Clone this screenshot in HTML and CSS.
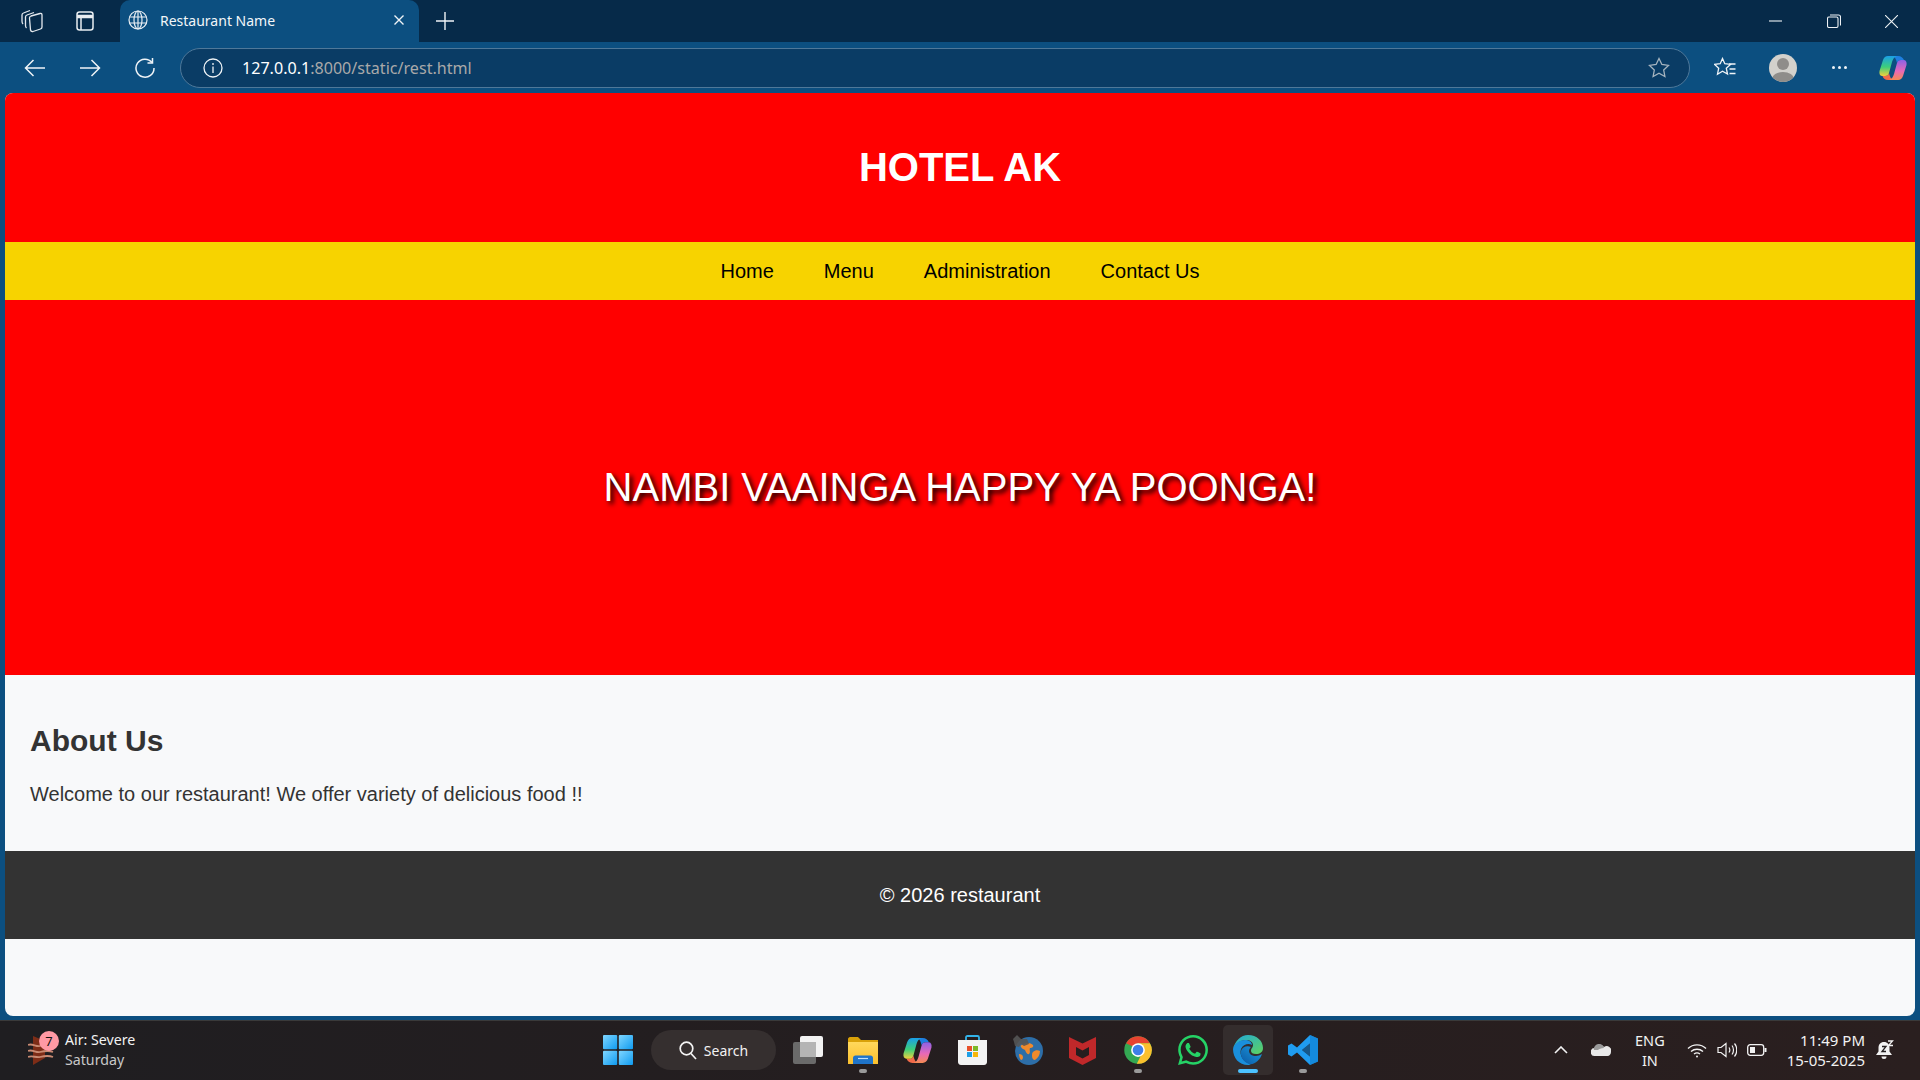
FILE: index.html
```html
<!DOCTYPE html>
<html lang="en">
<head>
<meta charset="utf-8">
<title>Restaurant Name</title>
<link rel="stylesheet" href="styles.css">
</head>
<body>
<svg class="defs" width="0" height="0">
  <defs>
    <linearGradient id="cpA" x1="0" y1="0" x2="0" y2="1"><stop offset="0" stop-color="#1a9fe8"/><stop offset=".55" stop-color="#3dcf7a"/><stop offset="1" stop-color="#f2d03c"/></linearGradient>
    <linearGradient id="cpB" x1="0" y1="0" x2="0" y2="1"><stop offset="0" stop-color="#8a62e6"/><stop offset=".55" stop-color="#e868b8"/><stop offset="1" stop-color="#f58a52"/></linearGradient>
    <symbol id="copilot" viewBox="0 0 28 26">
      <path d="M14 1h5c3 0 5 2 6 4h-3c-2 0-3.500 1-4 3-1-4-2-6-4-7z" fill="#1f7fe0"/>
      <path d="M14 25H9c-3 0-5-2-5.500-4H6c2 0 3.500-1 4-3 1 4 2 6 4 7z" fill="#f26a4a"/>
      <path d="M9 1h9c-3 1-4 3-5 6l-3 11c-.5 2-2 3-4 3H3.500C1 21 0 19 .5 16L4 5C5 2.500 6.500 1 9 1z" fill="url(#cpA)"/>
      <path d="M19 25h-9c3-1 4-3 5-6l3-11c.5-2 2-3 4-3h2.500C27 5 28 7 27.500 10L24 21c-1 2.500-2.500 4-5 4z" fill="url(#cpB)"/>
    </symbol>
    <linearGradient id="winG" x1="0" y1="0" x2="1" y2="1"><stop offset="0" stop-color="#7fd6ff"/><stop offset="1" stop-color="#0f9bf0"/></linearGradient>
    <linearGradient id="edgeA" x1="0" y1="1" x2="1" y2="0"><stop offset="0" stop-color="#0c59a4"/><stop offset="1" stop-color="#1b9de2"/></linearGradient>
    <linearGradient id="edgeB" x1="0" y1="0" x2="1" y2="1"><stop offset="0" stop-color="#1fa9dc"/><stop offset="1" stop-color="#5fd35d"/></linearGradient>
    <linearGradient id="folderG" x1="0" y1="0" x2="0" y2="1"><stop offset="0" stop-color="#ffd85c"/><stop offset="1" stop-color="#fbc02d"/></linearGradient>
  </defs>
</svg>

<div class="tabstrip">
  <div class="strip-left">
    <span class="strip-btn">
      <svg width="22" height="24" viewBox="0 0 22 24" fill="none" stroke="#e4e9ee" stroke-width="1.300"><path d="M10 7l9-2.500Q21 4 21 6v12q0 1.500-1.500 2L12 22.500q-2 .5-2.500-1.500L8.500 9q0-1.500 1.500-2z"/><path d="M5.500 19q-1-1-1-2.500V8q0-1.500 1.500-2l7-2.500"/><path d="M2 15q-1-1-1-3V6q0-1.500 1.500-2L9 1.500"/></svg>
    </span>
    <span class="strip-btn strip-btn-next">
      <svg width="18" height="20" viewBox="0 0 18 20" fill="none" stroke="#e8edf1" stroke-width="1.500"><rect x="1" y="1" width="16" height="18" rx="2.500"/><path d="M1 5.500h16" stroke-width="3.500"/><path d="M5 6v13"/></svg>
    </span>
  </div>
  <div class="tab">
    <svg class="tab-globe" width="20" height="20" viewBox="0 0 20 20" fill="none" stroke="#e8eef3" stroke-width="1.200"><circle cx="10" cy="10" r="9"/><ellipse cx="10" cy="10" rx="4" ry="9"/><path d="M1.500 7h17M1.500 13h17M10 1v18"/></svg>
    <span class="tab-title">Restaurant Name</span>
    <svg width="12" height="12" viewBox="0 0 12 12" stroke="#f0f4f7" stroke-width="1.400"><path d="M1.500 1.500l9 9M10.500 1.500l-9 9"/></svg>
  </div>
  <svg class="new-tab" width="18" height="18" viewBox="0 0 18 18" stroke="#f0f4f7" stroke-width="1.400"><path d="M9 0v18M0 9h18"/></svg>
  <div class="win-controls">
    <svg width="13" height="13" viewBox="0 0 13 13" stroke="#eef2f5" stroke-width="1.100"><path d="M0 6h13"/></svg>
    <svg width="14" height="14" viewBox="0 0 14 14" fill="none" stroke="#eef2f5" stroke-width="1.100"><rect x=".5" y="3" width="10.500" height="10.500" rx="1.500"/><path d="M3 1h8.500c1 0 2 1 2 2v8.500"/></svg>
    <svg width="13" height="13" viewBox="0 0 13 13" stroke="#eef2f5" stroke-width="1.100"><path d="M0 0l13 13M13 0L0 13"/></svg>
  </div>
</div>

<div class="toolbar">
  <div class="nav-btns">
    <svg width="22" height="18" viewBox="0 0 22 18" fill="none" stroke="#f0f4f7" stroke-width="1.500"><path d="M21 9H1.500M9.500 1 1.500 9l8 8"/></svg>
    <svg width="22" height="18" viewBox="0 0 22 18" fill="none" stroke="#f0f4f7" stroke-width="1.500"><path d="M1 9h19.500M12.500 1l8 8-8 8"/></svg>
    <svg width="20" height="22" viewBox="0 0 20 22" fill="none" stroke="#f0f4f7" stroke-width="1.500"><path d="M17 5.500A9 9 0 1 0 19 11"/><path d="M17.500 1v5h-5"/></svg>
  </div>
  <div class="address">
    <svg width="20" height="20" viewBox="0 0 20 20" fill="none" stroke="#f0f4f7" stroke-width="1.300"><circle cx="10" cy="10" r="9"/><path d="M10 8.500V15M10 5v2"/></svg>
    <span class="url"><span class="url-host">127.0.0.1</span><span class="url-rest">:8000/static/rest.html</span></span>
    <svg class="addr-star" width="22" height="21" viewBox="0 0 22 21" fill="none" stroke="#a6b4bf" stroke-width="1.300"><path d="M11 1.500l2.900 6 6.600.9-4.800 4.600 1.200 6.500-5.900-3.200-5.900 3.200 1.200-6.500L1.500 8.400l6.600-.9z"/></svg>
  </div>
  <div class="tool-right">
    <svg width="22" height="22" viewBox="0 0 22 22" fill="none" stroke="#f0f4f7" stroke-width="1.300"><path d="M8.500 1.500l2.300 5.200 5.700.7-4.200 3.800 1.200 5.800-5-2.800-5 3 1.200-6-4-3.800 5.500-.7z"/><path d="M15 7h6.500M15.500 12h6M15.500 16.500h6"/></svg>
    <span class="avatar"><span class="avatar-head"></span><span class="avatar-body"></span></span>
    <span class="dots"><i></i><i></i><i></i></span>
    <svg class="tool-copilot" width="28" height="26"><use href="#copilot"/></svg>
  </div>
</div>

<main class="page">
  <header class="site-header"><h1>HOTEL AK</h1></header>
  <nav class="site-nav">
    <a>Home</a><a>Menu</a><a>Administration</a><a>Contact Us</a>
  </nav>
  <section class="hero"><h2>NAMBI VAAINGA HAPPY YA POONGA!</h2></section>
  <section class="about">
    <h2>About Us</h2>
    <p>Welcome to our restaurant! We offer variety of delicious food !!</p>
  </section>
  <footer class="site-footer">© 2026 restaurant</footer>
</main>

<div class="taskbar">
  <div class="tb-left">
    <span class="weather">
      <svg width="26" height="32" viewBox="0 0 26 32"><path d="M5 2 17 7v17L5 31z" fill="#7d2d17"/><path d="M0 11c4-2 8 2 12 1s8-2 12 0M0 17c4-2 8 2 12 1s8-2 13 0M0 23c4-2 8 1 12 0s8-2 13 0" fill="none" stroke="#c98a72" stroke-width="1.800"/></svg>
      <span class="badge">7</span>
    </span>
    <span class="weather-text"><span class="w1">Air: Severe</span><span class="w2">Saturday</span></span>
  </div>
  <div class="tb-center">
    <span class="cell">
      <svg width="30" height="30" viewBox="0 0 30 30" fill="url(#winG)"><rect x="0" y="0" width="14.200" height="14.200" rx="1"/><rect x="15.800" y="0" width="14.200" height="14.200" rx="1"/><rect x="0" y="15.800" width="14.200" height="14.200" rx="1"/><rect x="15.800" y="15.800" width="14.200" height="14.200" rx="1"/></svg>
    </span>
    <span class="search">
      <svg width="18" height="19" viewBox="0 0 18 19" fill="none" stroke="#f4f4f4" stroke-width="1.700"><circle cx="7.500" cy="7.500" r="6.300"/><path d="M12 12.500l5 5.500"/></svg>
      <span>Search</span>
    </span>
    <span class="cell">
      <svg width="30" height="28" viewBox="0 0 30 28"><rect x="0" y="6" width="23" height="22" rx="2" fill="#6a6a6a"/><rect x="7" y="0" width="23" height="21" rx="2" fill="#f2f2f2"/><rect x="7" y="6" width="16" height="15" fill="#b4b4b4"/></svg>
    </span>
    <span class="cell">
      <svg width="30" height="27" viewBox="0 0 30 27"><path d="M0 2c0-1 1-2 2-2h8l3 3h17v5H0z" fill="#d9a109"/><path d="M0 5h30v22H0z" fill="url(#folderG)"/><path d="M5 21c0-1.500 1-2.500 2.500-2.500h15c1.500 0 2.500 1 2.500 2.500v6H5z" fill="#1f74c9"/><path d="M10 21.500h10" stroke="#bfe0fa" stroke-width="1.200"/></svg>
      <i class="pip"></i>
    </span>
    <span class="cell"><svg width="29" height="27"><use href="#copilot"/></svg></span>
    <span class="cell">
      <svg width="29" height="30" viewBox="0 0 29 30"><path d="M8 6V2.500C8 1.500 8.500 1 9.500 1h10c1 0 1.500.5 1.500 1.500V6" fill="none" stroke="#33b4ea" stroke-width="1.800"/><path d="M0 5h29v22c0 1.500-1 3-3 3H3c-2 0-3-1.500-3-3z" fill="#f3f3f3"/><rect x="9" y="11" width="5" height="5" fill="#e8502a"/><rect x="15" y="11" width="5" height="5" fill="#7db928"/><rect x="9" y="17" width="5" height="5" fill="#1f9fe6"/><rect x="15" y="17" width="5" height="5" fill="#f7b70a"/></svg>
    </span>
    <span class="cell">
      <svg width="30" height="30" viewBox="0 0 30 30"><circle cx="16" cy="16" r="14" fill="#2d6ea8"/><path d="M11 9c3-2 7-1 9 1 1 2-1 3-3 3-1 2 1 4-1 6-2 1-3-2-4-4-1-1-3-1-4-3s1-2 3-3zM20 17c2-2 5-2 7-1 0 4-2 7-5 9-2 0-3-2-3-4s0-3 1-4zM6 19c2 0 4 1 4 3s-1 3-2 3c-1-1-2-3-2-6z" fill="#f08a2c"/><path d="M0 4 4 0l4 4 6 0 2 5-5 2-3-2-2 3-4-1-1-4z" fill="#555" opacity=".9"/></svg>
    </span>
    <span class="cell">
      <svg width="27" height="30" viewBox="0 0 27 30"><path fill-rule="evenodd" d="M0 2 13.500 8.500 27 2v21L13.500 30 0 23zM7 12v8l6.500 3.500L20 20v-8l-6.500 3.500z" fill="#c0282a"/></svg>
    </span>
    <span class="cell">
      <svg width="30" height="30" viewBox="0 0 48 48"><circle cx="24" cy="24" r="22" fill="#34a853"/><path d="M24 2a22 22 0 0 1 19 11H24l-9 5L5 13A22 22 0 0 1 24 2z" fill="#e8432f"/><path d="M43 13a22 22 0 0 1-21 33l11-22-9-11z" fill="#fbc02d"/><circle cx="24" cy="24" r="11" fill="#fff"/><circle cx="24" cy="24" r="8.500" fill="#3f7fe8"/></svg>
      <i class="pip"></i>
    </span>
    <span class="cell">
      <svg width="30" height="30" viewBox="0 0 24 24" fill="#25d366"><path d="M17.472 14.382c-.297-.149-1.758-.867-2.030-.967-.273-.099-.471-.148-.67.15-.197.297-.767.966-.94 1.164-.173.199-.347.223-.644.075-.297-.15-1.255-.463-2.390-1.475-.883-.788-1.480-1.761-1.653-2.059-.173-.297-.018-.458.130-.606.134-.133.298-.347.446-.52.149-.174.198-.298.298-.497.099-.198.050-.371-.025-.52-.075-.149-.669-1.612-.916-2.207-.242-.579-.487-.5-.669-.51-.173-.008-.371-.01-.57-.01-.198 0-.52.074-.792.372-.272.297-1.040 1.016-1.040 2.479 0 1.462 1.065 2.875 1.213 3.074.149.198 2.096 3.200 5.077 4.487.709.306 1.262.489 1.694.625.712.227 1.360.195 1.871.118.571-.085 1.758-.719 2.006-1.413.248-.694.248-1.289.173-1.413-.074-.124-.272-.198-.57-.347m-5.421 7.403h-.004a9.870 9.870 0 01-5.031-1.378l-.361-.214-3.741.982.998-3.648-.235-.374a9.860 9.860 0 01-1.510-5.260c.001-5.450 4.436-9.884 9.888-9.884 2.640 0 5.122 1.030 6.988 2.898a9.825 9.825 0 012.893 6.994c-.003 5.450-4.437 9.884-9.885 9.884m8.413-18.297A11.815 11.815 0 0012.050 0C5.495 0 .16 5.335.157 11.892c0 2.096.547 4.142 1.588 5.945L.057 24l6.305-1.654a11.882 11.882 0 005.683 1.448h.005c6.554 0 11.890-5.335 11.893-11.893a11.821 11.821 0 00-3.480-8.413z"/></svg>
    </span>
    <span class="cell cell-active">
      <svg width="30" height="30" viewBox="0 0 30 30"><path d="M15 0c9 0 15 6 15 13 0 4-3 6-7 6-3 0-5-1-5-3 0-3 2-3 2-6 0-3-3-5-7-5-6 0-11 4-13 9C2 6 8 0 15 0z" fill="url(#edgeB)"/><path d="M0 14c1-5 6-9 12-9 4 0 7 2 7 5-3-2-9-1-11 4-2 6 2 13 10 15-2 1-2 1-3 1C6 30 0 23 0 14z" fill="#1a8fdb"/><path d="M8 16c1-4 6-6 10-4-1 1-2 2-2 4 0 3 3 5 7 5 2 0 4-1 6-2-2 6-7 11-13 10-6-2-9-8-8-13z" fill="url(#edgeA)"/></svg>
      <i class="pip pip-active"></i>
    </span>
    <span class="cell">
      <svg width="30" height="30" viewBox="0 0 30 30"><path d="M22 0l8 3.500v23L22 30 9 17.500l-5.500 4L0 19.500v-9l3.500-2 5.500 4z M22 8.500 14 15l8 6.500z" fill-rule="evenodd" fill="#1f9cf0"/><path d="M22 0l8 3.500v23L22 30z M22 8.500V21.500L14 15z" fill="#0d7fd1" fill-rule="evenodd" opacity=".6"/></svg>
      <i class="pip"></i>
    </span>
  </div>
  <div class="tb-right">
    <svg width="14" height="8" viewBox="0 0 14 8" fill="none" stroke="#f2f2f2" stroke-width="1.600"><path d="M1 7l6-6 6 6"/></svg>
    <svg class="tray-cloud" width="20" height="12" viewBox="0 0 20 12"><path d="M4 12a4 4 0 0 1-.5-8A5.500 5.500 0 0 1 13 3a4.500 4.500 0 0 1 7 5c0 2-1.500 4-3.500 4z" fill="#e8e8e8"/><path d="M3 6a4 4 0 0 1 10-2c-3 0-5 1-6 2z" fill="#9a9a9a"/></svg>
    <span class="lang"><span>ENG</span><span>IN</span></span>
    <svg width="20" height="15" viewBox="0 0 20 15" fill="none" stroke="#f2f2f2" stroke-width="1.400"><path d="M1 5.500a13 13 0 0 1 18 0M4 8.500a9 9 0 0 1 12 0M7 11a5 5 0 0 1 6 0"/><circle cx="10" cy="13.500" r="1" fill="#f2f2f2" stroke="none"/></svg>
    <svg class="tray-icon" width="20" height="16" viewBox="0 0 20 16" fill="none" stroke="#f2f2f2" stroke-width="1.200"><path d="M1 5.500h3L9 1.500v13l-5-4H1z"/><path d="M12 5.500c1 1.500 1 3.500 0 5M15 3.500c2 2.500 2 6.500 0 9M17.500 1.500c3 3.500 3 9.500 0 13"/></svg>
    <svg class="tray-icon" width="20" height="12" viewBox="0 0 20 12" fill="none" stroke="#f2f2f2" stroke-width="1.300"><rect x=".7" y=".7" width="16" height="10.600" rx="2.500"/><rect x="3" y="3" width="5" height="6" fill="#f2f2f2" stroke="none"/><path d="M18.500 4v4" stroke-width="2"/></svg>
    <span class="clock"><span>11:49 PM</span><span>15-05-2025</span></span>
    <svg class="tray-bell" width="18" height="20" viewBox="0 0 18 20" fill="#f2f2f2"><path d="M8 2c-3.500 0-5.500 2.500-5.500 6v3.500L0 15h16l-2.500-3.500V8c0-3.500-2-6-5.500-6z"/><path d="M5.500 16.500h5a2.500 2.500 0 0 1-5 0z"/><path d="M6 6.500h4l-4 5h4" fill="none" stroke="#231f20" stroke-width="1.300"/><path d="M12 1h4.500l-4 4.500H17" fill="none" stroke="#f2f2f2" stroke-width="1.300"/></svg>
  </div>
</div>
</body>
</html>
```

FILE: styles.css
```css
* { box-sizing: border-box; }
html, body { margin: 0; height: 100%; }
body {
  display: flex;
  flex-direction: column;
  height: 100vh;
  overflow: hidden;
  background: #0c4f80;
  font-family: "Noto Sans", sans-serif;
}
.defs { display: block; height: 0; }

/* browser tab strip */
.tabstrip {
  display: flex;
  align-items: center;
  height: 42px;
  flex: none;
  background: #062a49;
  color: #fff;
}
.strip-left { display: flex; align-items: center; width: 120px; height: 100%; padding-left: 21px; }
.strip-btn { display: flex; }
.strip-btn-next { margin-left: 33px; }
.tab {
  display: flex;
  align-items: center;
  width: 299px;
  height: 100%;
  padding: 0 14px 2px 8px;
  background: #0c4f80;
  border-radius: 10px 10px 0 0;
}
.tab-title { flex: 1; margin-left: 12px; font-size: 14px; color: #f2f6f9; }
.new-tab { margin-left: 17px; }
.win-controls {
  display: flex;
  align-items: center;
  gap: 44px;
  margin-left: auto;
  padding-right: 22px;
}
.win-controls svg:first-child { margin-right: 1px; }

/* browser toolbar */
.toolbar {
  display: flex;
  align-items: center;
  height: 51px;
  flex: none;
  background: #0c4f80;
}
.nav-btns { display: flex; align-items: center; gap: 33px; width: 180px; padding-left: 24px; }
.nav-btns svg:last-child { margin-left: 1px; }
.address {
  display: flex;
  align-items: center;
  width: 1510px;
  height: 40px;
  padding: 0 19px 0 22px;
  background: #0a3c65;
  border: 1px solid #4f7899;
  border-radius: 20px;
}
.url { margin-left: 19px; font-size: 16.1px; white-space: nowrap; }
.url-host { color: #fff; }
.url-rest { color: #a9a9a9; }
.addr-star { margin-left: auto; }
.tool-right { display: flex; align-items: center; padding-left: 24px; }
.avatar {
  position: relative;
  display: block;
  width: 28px;
  height: 28px;
  margin-left: 33px;
  border-radius: 50%;
  overflow: hidden;
  background: #d3d1cc;
}
.avatar-head { position: absolute; left: 8px; top: 4px; width: 12px; height: 12px; border-radius: 50%; background: #8f8d8a; }
.avatar-body { position: absolute; left: 3px; top: 18px; width: 22px; height: 14px; border-radius: 50%; background: #8f8d8a; }
.dots { display: flex; gap: 3px; margin-left: 35px; }
.dots i { display: block; width: 3px; height: 3px; border-radius: 50%; background: #f0f4f7; }
.tool-copilot { margin-left: 32px; }

/* page */
.page {
  display: flex;
  flex-direction: column;
  height: 923px;
  flex: none;
  margin: 0 5px;
  overflow: hidden;
  background: #f8f9fa;
  border-radius: 8px;
  font-family: "Liberation Sans", Arial, sans-serif;
}
.site-header {
  display: flex;
  align-items: center;
  justify-content: center;
  height: 149px;
  flex: none;
  background: #ff0000;
  color: #fff;
}
.site-header h1 { margin: 0; font-size: 40px; font-weight: 700; }
.site-nav {
  display: flex;
  align-items: center;
  justify-content: center;
  gap: 50px;
  height: 58px;
  flex: none;
  background: #f7d300;
  color: #000;
  font-size: 20px;
}
.hero {
  display: flex;
  align-items: center;
  justify-content: center;
  height: 375px;
  flex: none;
  background: #ff0000;
  color: #fff;
}
.hero h2 { margin: 0; font-size: 40px; font-weight: 400; text-shadow: 3px 3px 5px #000; }
.about {
  height: 176px;
  flex: none;
  padding: 47px 25px;
  color: #333;
}
.about h2 { margin: 0 0 24px; font-size: 30px; font-weight: 700; line-height: 37px; }
.about p { margin: 0; font-size: 20px; line-height: 23px; }
.site-footer {
  display: flex;
  align-items: center;
  justify-content: center;
  height: 88px;
  flex: none;
  background: #333;
  color: #fff;
  font-size: 20px;
}

/* taskbar */
.taskbar {
  display: grid;
  grid-template-columns: 1fr auto 1fr;
  align-items: center;
  height: 60px;
  flex: none;
  margin-top: 4px;
  background: linear-gradient(90deg, #1f1e21, #261e1f 60%, #2a1f1f);
  box-shadow: inset 0 1px 0 #3a3a3a;
  color: #f2f2f2;
}
.tb-left { display: flex; align-items: center; padding-left: 28px; }
.weather { position: relative; display: flex; }
.badge {
  position: absolute;
  left: 11px;
  top: -3px;
  width: 20px;
  height: 20px;
  border-radius: 50%;
  background: #ff99a4;
  color: #111;
  font-size: 13px;
  line-height: 20px;
  text-align: center;
}
.weather-text { display: flex; flex-direction: column; margin-left: 11px; font-size: 14.2px; line-height: 20px; }
.w2 { color: #c9c9c9; }
.tb-center { display: flex; align-items: center; }
.cell {
  position: relative;
  display: flex;
  align-items: center;
  justify-content: center;
  width: 55px;
  height: 50px;
}
.cell-active { background: #342d2d; border-radius: 5px; width: 50px; margin: 0 2.5px; }
.pip {
  position: absolute;
  left: 50%;
  bottom: 2px;
  width: 8px;
  height: 4px;
  margin-left: -4px;
  border-radius: 2px;
  background: #9a9a9a;
}
.pip-active { width: 20px; margin-left: -10px; background: #4cc2ff; }
.search {
  display: flex;
  align-items: center;
  justify-content: center;
  gap: 7px;
  width: 125px;
  height: 40px;
  margin: 0 4px 0 6px;
  border-radius: 20px;
  background: #352f2f;
  font-size: 14px;
}
.tb-right { display: flex; align-items: center; justify-content: flex-end; padding-right: 26px; }
.tray-cloud { margin-left: 23px; }
.lang {
  display: flex;
  flex-direction: column;
  align-items: center;
  margin: 0 22px 0 24px;
  font-size: 14.5px;
  line-height: 20px;
}
.tray-icon { margin-left: 10px; }
.clock {
  display: flex;
  flex-direction: column;
  align-items: flex-end;
  margin-left: 20px;
  font-size: 15px;
  line-height: 20px;
}
.tray-bell { margin-left: 11px; }
```
